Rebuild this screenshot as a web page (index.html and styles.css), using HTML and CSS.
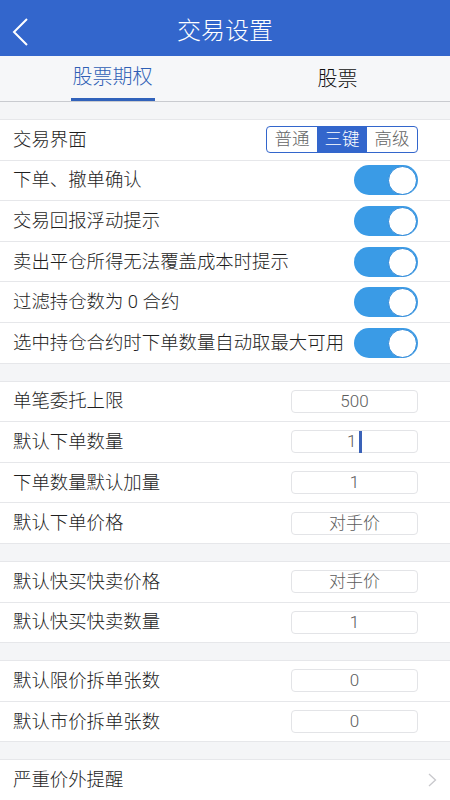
FILE: index.html
```html
<!DOCTYPE html>
<html lang="zh-CN">
<head>
    <meta charset="UTF-8">
    <meta name="viewport" content="width=device-width, initial-scale=1.0">
    <title>交易设置</title>
    <link rel="stylesheet" href="styles.css">
</head>
<body>
    <div class="header">
        <svg class="back" width="18" height="30" viewBox="0 0 18 30">
            <polyline points="16,2 3,15 16,28" fill="none" stroke="#fff" stroke-width="2"/>
        </svg>
        <div class="title">交易设置</div>
    </div>

    <div class="tabs">
        <div class="tab active"><span>股票期权</span></div>
        <div class="tab"><span>股票</span></div>
    </div>

    <div class="gap"></div>
    <div class="group">
        <div class="row">
            <span class="label">交易界面</span>
            <div class="seg">
                <span>普通</span>
                <span class="on">三键</span>
                <span>高级</span>
            </div>
        </div>
        <div class="row"><span class="label">下单、撤单确认</span><div class="switch"></div></div>
        <div class="row"><span class="label">交易回报浮动提示</span><div class="switch"></div></div>
        <div class="row"><span class="label">卖出平仓所得无法覆盖成本时提示</span><div class="switch"></div></div>
        <div class="row"><span class="label">过滤持仓数为 0 合约</span><div class="switch"></div></div>
        <div class="row"><span class="label">选中持仓合约时下单数量自动取最大可用</span><div class="switch"></div></div>
    </div>

    <div class="gap"></div>
    <div class="group">
        <div class="row"><span class="label">单笔委托上限</span><div class="field">500</div></div>
        <div class="row"><span class="label">默认下单数量</span><div class="field">1<i class="caret"></i></div></div>
        <div class="row"><span class="label">下单数量默认加量</span><div class="field">1</div></div>
        <div class="row"><span class="label">默认下单价格</span><div class="field">对手价</div></div>
    </div>

    <div class="gap"></div>
    <div class="group">
        <div class="row"><span class="label">默认快买快卖价格</span><div class="field">对手价</div></div>
        <div class="row"><span class="label">默认快买快卖数量</span><div class="field">1</div></div>
    </div>

    <div class="gap"></div>
    <div class="group">
        <div class="row"><span class="label">默认限价拆单张数</span><div class="field">0</div></div>
        <div class="row"><span class="label">默认市价拆单张数</span><div class="field">0</div></div>
    </div>

    <div class="gap"></div>
    <div class="group">
        <div class="row">
            <span class="label">严重价外提醒</span>
            <svg class="arrow" width="9" height="14" viewBox="0 0 9 14">
                <polyline points="1,1 7.5,7 1,13" fill="none" stroke="#c8c8cc" stroke-width="1.3"/>
            </svg>
        </div>
    </div>
</body>
</html>
```

FILE: styles.css
```css
body {
    margin: 0;
    background: #f4f5f7;
    font-family: Roboto, "Noto Sans CJK SC", sans-serif;
    font-weight: 300;
    color: #222;
    overflow: hidden;
}
.header {
    height: 56px;
    box-sizing: border-box;
    padding-top: 6px;
    background: #3366cc;
    display: flex;
    align-items: center;
    justify-content: center;
    position: relative;
}
.back {
    position: absolute;
    left: 11px;
    top: 17px;
}
.title {
    color: #fff;
    font-size: 24px;
    line-height: 30px;
}
.tabs {
    display: flex;
    height: 45px;
    background: #f6f7f9;
    border-bottom: 1px solid #c9cbd0;
}
.tab {
    flex: 1;
    display: flex;
    justify-content: center;
    font-size: 20px;
    color: #111;
}
.tab span {
    line-height: 46px;
    padding: 0 2px;
}
.tab.active span {
    color: #2f5fb5;
    border-bottom: 3px solid #3162bb;
    line-height: 42px;
}
.gap {
    height: 17px;
    border-bottom: 1px solid #e6e7ea;
}
.group {
    background: #fff;
}
.row {
    height: 40.6px;
    box-sizing: border-box;
    border-bottom: 1px solid #e6e7ea;
    display: flex;
    align-items: center;
    justify-content: space-between;
    padding: 0 32px 0 13px;
}
.label {
    font-size: 18.4px;
    line-height: 24px;
    color: #1e1e1e;
}
.seg {
    display: flex;
    border: 1.5px solid #3366cc;
    border-radius: 4px;
    height: 25px;
    overflow: hidden;
}
.seg span {
    width: 50px;
    text-align: center;
    font-size: 17.5px;
    line-height: 25px;
    color: #666;
}
.seg .on {
    background: #3366cc;
    color: #fff;
}
.switch {
    width: 64px;
    height: 30px;
    border-radius: 15px;
    background: #3a9be6;
    position: relative;
}
.switch::after {
    content: "";
    position: absolute;
    right: 1px;
    top: 1px;
    width: 27px;
    height: 27px;
    border-radius: 50%;
    background: #fff;
    border: 0.5px solid #2d88d8;
}
.field {
    width: 127px;
    height: 23px;
    box-sizing: border-box;
    border: 1px solid #e3e4e7;
    border-radius: 4px;
    text-align: center;
    font-size: 17px;
    line-height: 21px;
    color: #5c5c5c;
}
.caret {
    display: inline-block;
    width: 2.5px;
    height: 22px;
    background: #3a62b8;
    vertical-align: top;
    margin-left: 3px;
}
.arrow {
    margin-right: -19px;
}
```
